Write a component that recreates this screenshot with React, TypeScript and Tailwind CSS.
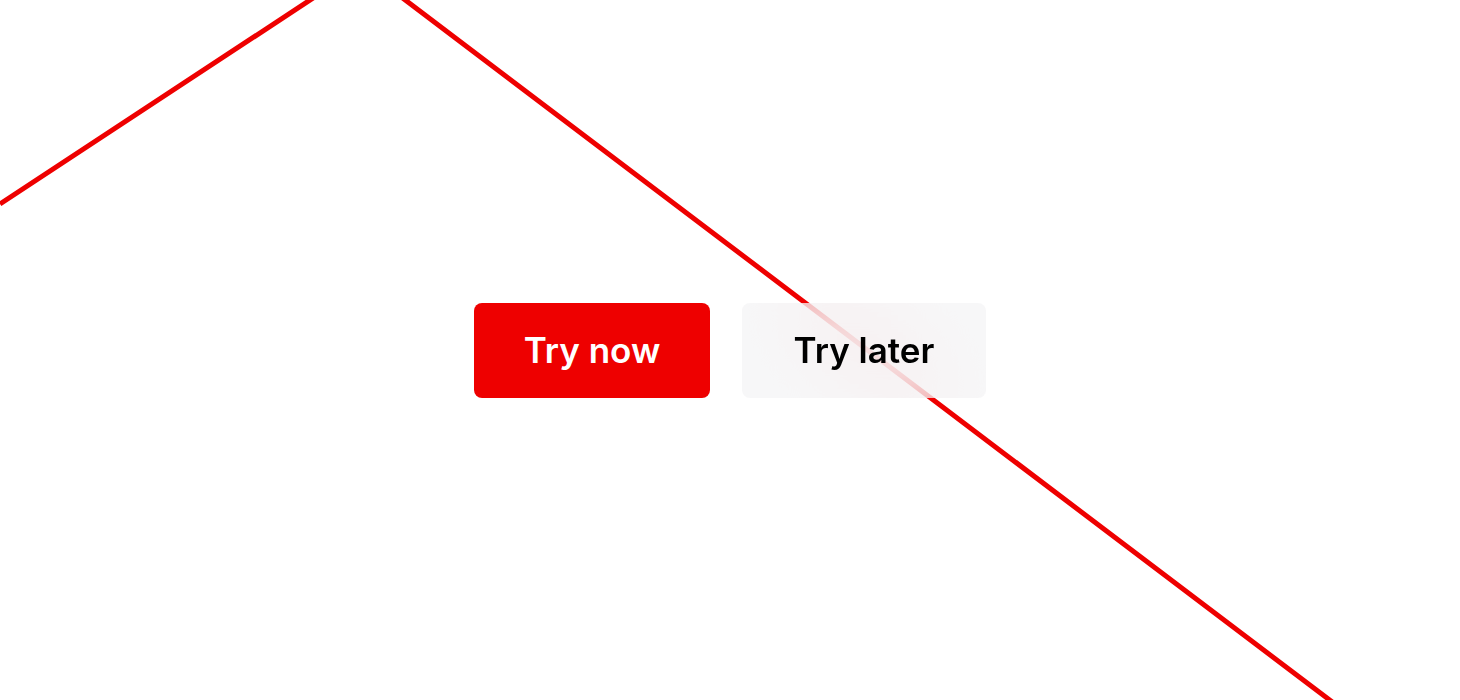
export default function App() {
    return (
        <div className="relative w-full h-[700px] overflow-hidden bg-white font-['Inter',sans-serif]">
            {/* the red zigzag behind everything */}
            <svg className="absolute inset-0" width="1460" height="700" viewBox="0 0 1460 700">
                <polyline
                    points="0,204 361,-33.5 1360,723"
                    fill="none"
                    stroke="#ee0000"
                    strokeWidth="5"
                />
            </svg>

            <div className="relative flex h-full items-center justify-center gap-8">
                <button className="h-[95px] w-[236px] rounded-lg bg-[#ee0000] text-white text-[35px] font-semibold">
                    Try now
                </button>
                <button className="h-[95px] w-[244px] rounded-lg bg-[#f2f2f4]/60 backdrop-blur-2xl text-black text-[35px] font-semibold">
                    Try later
                </button>
            </div>
        </div>
    );
}
